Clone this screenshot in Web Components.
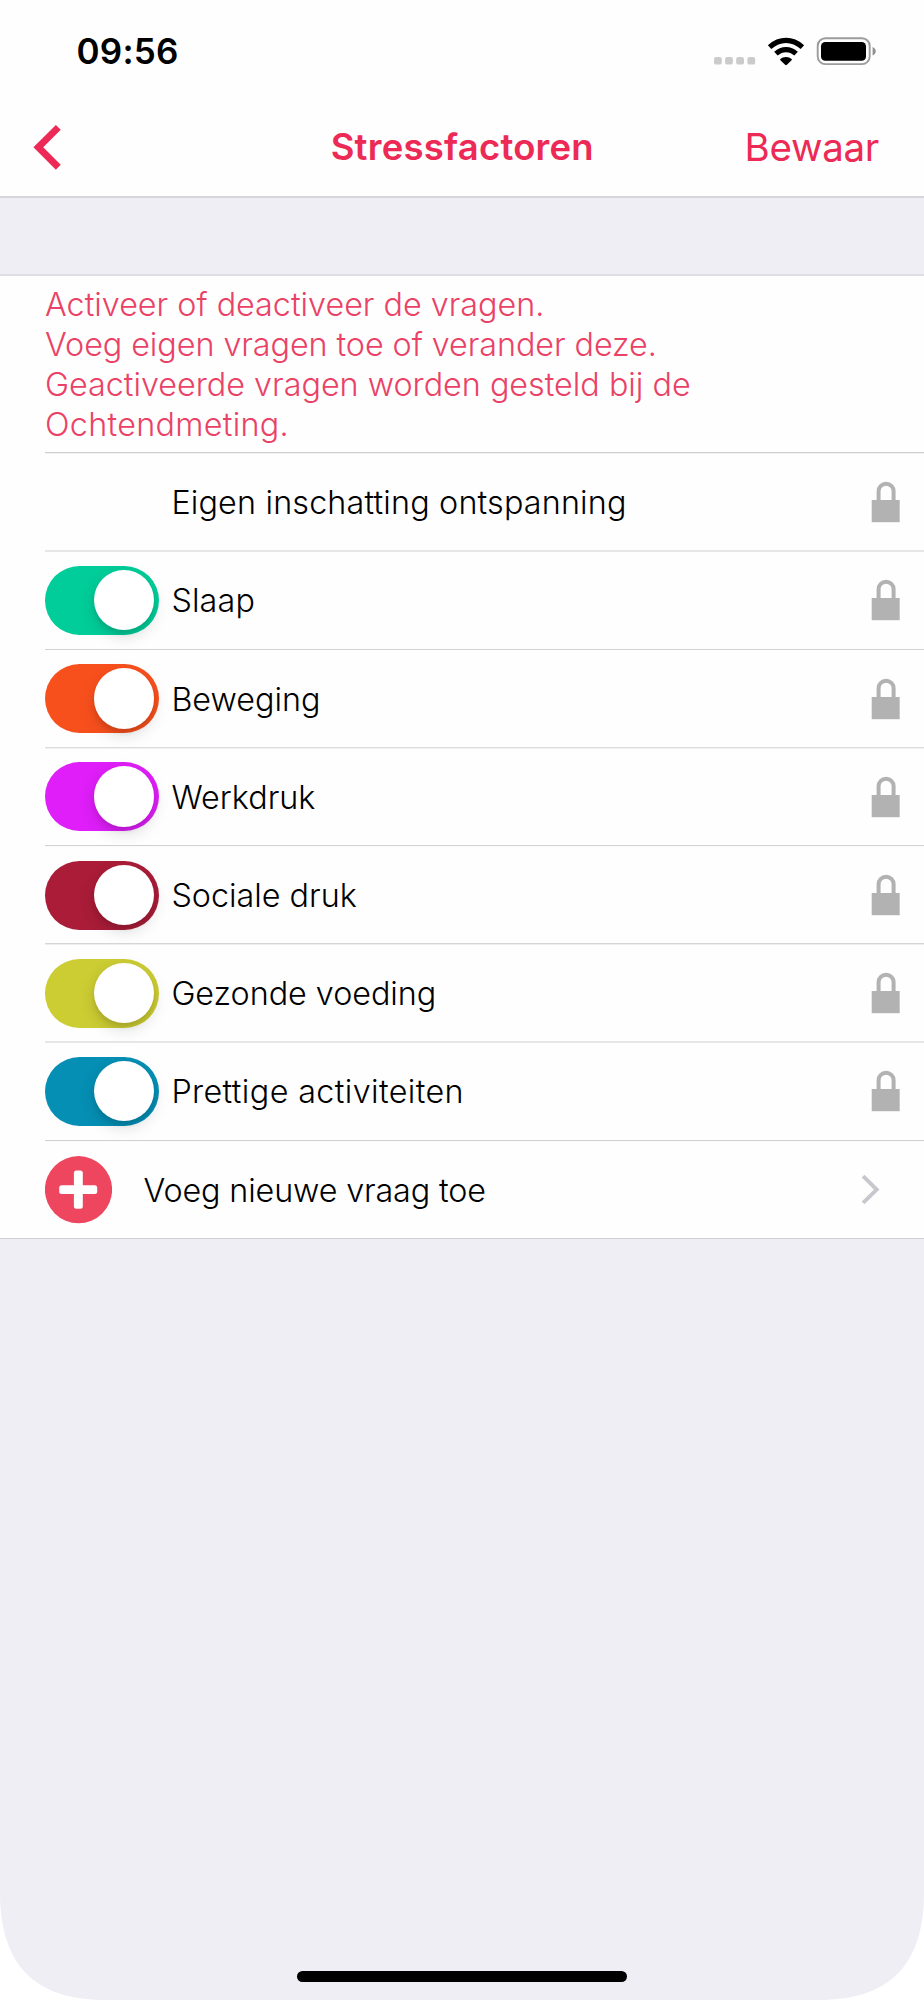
<!DOCTYPE html>
<html lang="nl">
<head>
<meta charset="utf-8">
<title>Stressfactoren</title>
<style>
html, body { margin: 0; background: #fff; }
body { font-family: Inter, "Liberation Sans", sans-serif; color: #000; width: 924px; height: 2000px; overflow: hidden; }
</style>
</head>
<body>
<app-screen>
  <status-bar slot="top">09:56</status-bar>
  <nav-bar slot="top">Stressfactoren<span slot="action">Bewaar</span></nav-bar>
  <intro-text>
    <text-line>Activeer of deactiveer de vragen.</text-line>
    <text-line style="letter-spacing:-.06px">Voeg eigen vragen toe of verander deze.</text-line>
    <text-line>Geactiveerde vragen worden gesteld bij de</text-line>
    <text-line style="letter-spacing:.3px">Ochtendmeting.</text-line>
  </intro-text>
  <list-row style="--h:98px;--a:#cfcfd1;--b:#f1f1f2;letter-spacing:.17px"><toggle-switch slot="lead" hidden></toggle-switch>Eigen inschatting ontspanning<lock-icon slot="end"></lock-icon></list-row>
  <list-row style="--h:99px;--p:1px;--a:#e7e7e8;--b:#e7e7e8;letter-spacing:.15px"><toggle-switch slot="lead" style="--tint:#00cd99"></toggle-switch>Slaap<lock-icon slot="end"></lock-icon></list-row>
  <list-row style="--h:98px;--p:1px;--a:#d2d2d4;--b:#fefefe;letter-spacing:0"><toggle-switch slot="lead" style="--tint:#f8501d"></toggle-switch>Beweging<lock-icon slot="end"></lock-icon></list-row>
  <list-row style="--h:98px;--p:1px;--a:#dcdcde;--b:#f1f1f2;letter-spacing:.05px"><toggle-switch slot="lead" style="--tint:#df1ef9"></toggle-switch>Werkdruk<lock-icon slot="end"></lock-icon></list-row>
  <list-row style="--h:98px;--a:#d2d2d4;--b:#fafafa"><toggle-switch slot="lead" style="--tint:#aa1c38"></toggle-switch>Sociale druk<lock-icon slot="end"></lock-icon></list-row>
  <list-row style="--h:98px;--a:#d5d5d7;--b:#ededee;letter-spacing:-.03px"><toggle-switch slot="lead" style="--tint:#cccc33"></toggle-switch>Gezonde voeding<lock-icon slot="end"></lock-icon></list-row>
  <list-row style="--h:99px;--p:1px;--a:#e7e7e8;--b:#e7e7e8;letter-spacing:.38px"><toggle-switch slot="lead" style="--tint:#058fb4"></toggle-switch>Prettige activiteiten<lock-icon slot="end"></lock-icon></list-row>
  <list-row style="--h:98px;--p:1px;--gap:31.500px;--end:44px;--a:#d2d2d4;--b:#fafafa;letter-spacing:-.14px"><add-icon slot="lead"></add-icon>Voeg nieuwe vraag toe<chevron-icon slot="end"></chevron-icon></list-row>
  <home-indicator slot="bottom"></home-indicator>
</app-screen>
<script>
function define(name, html) {
  const t = document.createElement('template');
  t.innerHTML = html;
  customElements.define(name, class extends HTMLElement {
    constructor() {
      super();
      this.attachShadow({ mode: 'open' }).append(t.content.cloneNode(true));
    }
  });
}

define('app-screen', `<style>
:host { display: flex; flex-direction: column; width: 924px; height: 2000px; background: #efeef5;
  clip-path: path("M0 0H924V1893C924 1965 889 2000 819 2000H105C35 2000 0 1965 0 1893Z"); }
.list { display: flex; flex-direction: column; margin-top: 76px; background: #fefefe;
  border-top: 2px solid #dfdee4; border-bottom: 1px solid #d0cfd5; }
.grow { flex: 1; }
</style><slot name="top"></slot><div class="list"><slot></slot></div><div class="grow"></div><slot name="bottom"></slot>`);

define('status-bar', `<style>
:host { display: flex; align-items: center; box-sizing: border-box; height: 101px; padding-left: 76.500px; background: #fefefe; }
.time { font: 600 35px/40px Inter, sans-serif; letter-spacing: .2px; flex: 1; }
svg { display: block; }
</style><span class="time"><slot></slot></span>
<svg width="210" height="40" viewBox="714 30 210 40">
<g fill="#cbcbcb"><rect x="714" y="56" width="7.8" height="7.6" rx="2.2"/><rect x="725.1" y="56" width="7.8" height="7.6" rx="2.2"/><rect x="736.2" y="56" width="7.8" height="7.6" rx="2.2"/><rect x="747.4" y="56" width="7.8" height="7.6" rx="2.2"/></g>
<g fill="none" stroke="#000" stroke-width="5.2"><path d="M769.6 46.1Q777.2 39.4 786 39.4T802.400 46.1"/><path d="M775.9 52.7Q780.4 48.6 786 48.6T796.1 52.7"/></g>
<path d="M786 55.9c2.200 0 4.200.8 5.600 2.100.4.400.4.800 0 1.200l-4.700 4.600c-.6.600-1.200.6-1.800 0l-4.700-4.600c-.4-.4-.4-.8 0-1.200 1.400-1.300 3.400-2.100 5.600-2.100z"/>
<rect x="817.7" y="37.300" width="52" height="25.800" rx="7.600" fill="none" stroke="#9c9c9c" stroke-width="1.900"/>
<rect x="821" y="40.900" width="45" height="18.900" rx="4.300"/>
<path d="M872.600 46c1.900.8 3.100 2.300 3.100 4.200s-1.200 3.500-3.100 4.300z" fill="#8f8f8f"/>
</svg>`);

define('nav-bar', `<style>
:host { display: grid; grid-template-columns: 1fr auto 1fr; align-items: center; box-sizing: border-box; height: 97px;
  padding: 0 45px 3px 31.500px; background: #fefefe; border-bottom: 2px solid #d6d5da; color: #ec2a55; }
svg { display: block; }
.title { font: 600 36.500px/44px Inter, sans-serif; letter-spacing: .22px; margin-left: 14px; }
.action { font: 400 38.500px/44px Inter, sans-serif; letter-spacing: -.3px; justify-self: end; }
</style>
<svg width="30" height="48" viewBox="32 123 30 48"><path d="M58.300 127.400L38.300 147.200 58.300 167.300" fill="none" stroke="#ec2a55" stroke-width="6.900"/></svg>
<span class="title"><slot></slot></span><span class="action"><slot name="action"></slot></span>`);

define('intro-text', `<style>
:host { display: flex; flex-direction: column; box-sizing: border-box; height: 176px; padding: 8.600px 45px 0; color: #ea4266;
  font: 300 32.300px/40px Inter, sans-serif; }
</style><slot></slot>`);

define('text-line', `<style>:host { display: block; height: 40px; white-space: nowrap; }</style><slot></slot>`);

define('list-row', `<style>
:host { display: flex; flex-direction: column; height: var(--h); }
.rule { height: 2px; margin-left: 45px; background: linear-gradient(var(--a) 50%, var(--b) 50%); }
.body { flex: 1; display: flex; align-items: center; box-sizing: border-box; padding: 0 var(--end, 24px) var(--p, 0px) 45px; }
.label { flex: 1; margin-left: var(--gap, 12.700px); padding-top: 2px; font: 300 32.300px/40px Inter, sans-serif; white-space: nowrap; }
</style><div class="rule"></div><div class="body"><slot name="lead"></slot><span class="label"><slot></slot></span><slot name="end"></slot></div>`);

define('toggle-switch', `<style>
:host { display: flex; justify-content: flex-end; align-items: center; box-sizing: border-box; width: 113.700px; height: 69px;
  padding-right: 4.700px; border-radius: 35px; background: var(--tint); }
:host([hidden]) { visibility: hidden; }
.knob { width: 60.500px; height: 60.500px; border-radius: 50%; background: #fff;
  box-shadow: 0 6px 16px rgba(0,0,0,.14), 0 4px 4px rgba(0,0,0,.08); }
</style><div class="knob"></div>`);

define('lock-icon', `<style>:host { display: block; } svg { display: block; }</style>
<svg width="29" height="42" viewBox="870 481 29 42"><rect x="870.700" y="500" width="28" height="22.200" fill="#b2b2b2"/>
<path d="M877.600 501V491.200a7.500 7.500 0 0 1 15 0V501" fill="none" stroke="#b2b2b2" stroke-width="4"/></svg>`);

define('add-icon', `<style>:host { display: block; } svg { display: block; }</style>
<svg width="67" height="68" viewBox="45 1156 67 68"><circle cx="78.500" cy="1189.700" r="33.600" fill="#ef465f"/>
<g fill="#fff"><rect x="59.200" y="1185.200" width="38" height="8.900" rx="2.500"/><rect x="73.900" y="1170.500" width="8.900" height="38.200" rx="2.500"/></g></svg>`);

define('chevron-icon', `<style>:host { display: block; } svg { display: block; }</style>
<svg width="20" height="32" viewBox="860 1173.500 20 32"><path d="M863.100 1175.700L876.700 1189.100 863.100 1202.300" fill="none" stroke="#c7c7cd" stroke-width="3.900"/></svg>`);

define('home-indicator', `<style>
:host { display: block; align-self: center; width: 330px; height: 11px; margin-bottom: 18px; border-radius: 6px; background: #000; }
</style>`);
</script>
</body>
</html>
